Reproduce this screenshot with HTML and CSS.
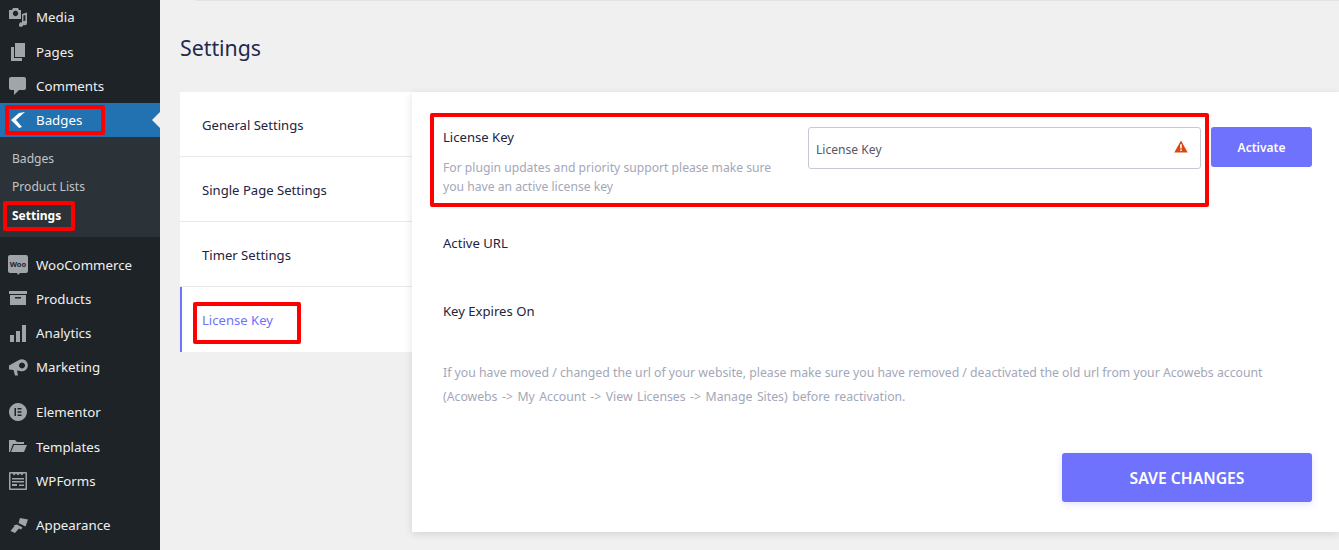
FILE: index.html
```html
<!DOCTYPE html>
<html lang="en">
<head>
<meta charset="utf-8">
<title>Settings</title>
<link rel="stylesheet" href="styles.css">
</head>
<body>
<div class="page">
  <aside class="sidebar">
    <nav class="menu">
      <a class="item item-first"><svg class="ico" viewBox="0 0 20 20"><path fill-rule="evenodd" d="M1 2h3l1-2h5l1 2h2v9H1zM7.500 2.800a2.700 2.700 0 1 0 .01 0z"/><path d="M14 6l5-1.500V15a2.200 2.200 0 1 1-1.600-2V7l-2 .6v9a2.200 2.200 0 1 1-1.400-2z"/></svg><span>Media</span></a>
      <a class="item"><svg class="ico" viewBox="0 0 20 20"><path d="M7 1h10v14H7z"/><path d="M3 5h3v11h8v3H3z"/></svg><span>Pages</span></a>
      <a class="item"><svg class="ico" viewBox="0 0 20 20"><path d="M3 1h13a2 2 0 0 1 2 2v9a2 2 0 0 1-2 2h-5l-5 5v-5H3a2 2 0 0 1-2-2V3a2 2 0 0 1 2-2z"/></svg><span>Comments</span></a>
      <a class="item item-current"><svg class="ico ico-white" viewBox="0 0 20 20"><path d="M17 2l-6 1-8 7 8 8 3-1-6-7z"/></svg><span>Badges</span></a>
      <div class="submenu">
        <a class="subitem">Badges</a>
        <a class="subitem">Product Lists</a>
        <a class="subitem subitem-current">Settings</a>
      </div>
      <a class="item item-gap"><svg class="ico" viewBox="0 0 20 20"><path d="M2 0h16a2 2 0 0 1 2 2v14a2 2 0 0 1-2 2h-6l-2 2-1-2H2a2 2 0 0 1-2-2V2a2 2 0 0 1 2-2z"/><text class="woo" x="10" y="11.500" text-anchor="middle">Woo</text></svg><span>WooCommerce</span></a>
      <a class="item"><svg class="ico" viewBox="0 0 20 20"><path fill-rule="evenodd" d="M1 2h18v3H1zM2 6h16v10H2zM7 8v1.500h6V8z"/></svg><span>Products</span></a>
      <a class="item"><svg class="ico" viewBox="0 0 20 20"><path d="M2 12h4v7H2zM8 8h4v11H8zM14 2h4v17h-4z"/></svg><span>Analytics</span></a>
      <a class="item"><svg class="ico" viewBox="0 0 20 20"><path fill-rule="evenodd" d="M1 8.500L11 3a6 6 0 1 1 1 11l-3-.5 1 5H7l-1.500-5.500L1 12.500zM14 5.500a3 3 0 1 0 .01 0z"/></svg><span>Marketing</span></a>
      <a class="item item-gap"><svg class="ico" viewBox="0 0 20 20"><path fill-rule="evenodd" d="M10 1a9 9 0 1 1-.01 0zM6.500 6v8H8V6zM9.500 6v1.500h4V6zM9.500 9.200v1.500h4V9.200zM9.500 12.500V14h4v-1.500z"/></svg><span>Elementor</span></a>
      <a class="item item-shift"><svg class="ico" viewBox="0 0 20 20"><path d="M1 3h6l2 2h7v2H5l-3 8H1z"/><path d="M6 8h13l-3 7H3z"/></svg><span>Templates</span></a>
      <a class="item"><svg class="ico" viewBox="0 0 20 20"><path fill-rule="evenodd" d="M2 1h16a1 1 0 0 1 1 1v16a1 1 0 0 1-1 1H2a1 1 0 0 1-1-1V2a1 1 0 0 1 1-1zM2.500 2.500v15h15v-15h-2l-1.500 2-2-2-2 2-2-2-2 2-1.500-2zM4 7h12v1.500H4zM4 10h12v1.500H4zM11 13.500h5V15h-5zM4 13h5v2H4z"/></svg><span>WPForms</span></a>
      <a class="item item-gap-last"><svg class="ico" viewBox="0 0 20 20"><path d="M12 3l8 1.500-2.500 7-7-3.500z"/><path d="M9 9.500l5.500 3-1.500 2-2-1-4 4.500-4.500-2 4-5-1-.5z"/></svg><span>Appearance</span></a>
    </nav>
  </aside>
  <main class="content">
    <div class="topline"></div>
    <h1 class="title">Settings</h1>
    <div class="settings">
      <ul class="tabs">
        <li class="tab">General Settings</li>
        <li class="tab">Single Page Settings</li>
        <li class="tab">Timer Settings</li>
        <li class="tab tab-active">License Key</li>
      </ul>
      <section class="panel">
        <div class="license-row">
          <div class="license-info">
            <div class="label">License Key</div>
            <p class="hint">For plugin updates and priority support please make sure you have an active license key</p>
          </div>
          <div class="input">
            <span class="input-text">License Key</span>
            <svg class="warn" viewBox="0 0 14 13"><path fill-rule="evenodd" d="M7 0.500L13.700 12.500H.3zM6.200 4.200v4.300h1.600V4.200zM6.200 9.400v1.600h1.600V9.400z"/></svg>
          </div>
          <button class="btn-activate">Activate</button>
        </div>
        <div class="label label-url">Active URL</div>
        <div class="label label-exp">Key Expires On</div>
        <div class="note">
          <p class="note-line">If you have moved / changed the url of your website, please make sure you have removed / deactivated the old url from your Acowebs account</p>
          <p class="note-line note-line-wide">(Acowebs -&gt; My Account -&gt; View Licenses -&gt; Manage Sites) before reactivation.</p>
        </div>
        <div class="actions"><button class="btn-save">SAVE CHANGES</button></div>
      </section>
    </div>
  </main>
  <div class="mark mark-badges"></div>
  <div class="mark mark-settings"></div>
  <div class="mark mark-license"></div>
  <div class="mark mark-tab"></div>
</div>
</body>
</html>
```
FILE: styles.css
```css
* { box-sizing: border-box; }
html, body { margin: 0; padding: 0; height: 550px; overflow: hidden; }
body { background: #f0f0f1; font-family: "Noto Sans", "Open Sans", sans-serif; color: #23233f; }
.page { position: relative; display: flex; width: 1339px; height: 550px; overflow: hidden; }

.sidebar { width: 160px; flex: none; background: #1d2327; }
.menu { display: flex; flex-direction: column; }
.item { display: flex; align-items: center; height: 34px; padding-left: 8px; font-size: 13.300px; color: #f0f0f1; }
.item span { margin-left: 8px; }
.item-first { height: 35px; }
.item-first span { margin-bottom: 1px; }
.ico { width: 20px; height: 20px; fill: #a0a5aa; flex: none; }
.ico-white { fill: #fff; }
.woo { font: 700 7.500px "Noto Sans", sans-serif; fill: #1d2327; }
.item-current { position: relative; background: #2271b1; color: #fff; }
.item-current::after { content: ""; position: absolute; right: 0; top: 9px; border: 8px solid transparent; border-right-color: #f0f0f1; border-left-width: 0; }
.submenu { display: flex; flex-direction: column; background: #2c3338; padding-top: 8px; height: 100px; }
.subitem { height: 28px; line-height: 28px; padding-left: 12px; font-size: 12.100px; color: #c3c4c7; }
.subitem-current { color: #fff; font-weight: 700; font-size: 12px; padding-top: 1px; }
.item-gap { margin-top: 11px; }
.item-shift { margin-top: 1px; }
.item-gap-last { margin-top: 10px; }

.content { flex: 1; padding-left: 20px; min-width: 0; }
.topline { height: 1px; margin-left: 15px; background: #e4e4e6; }
.title { margin: 32px 0 0; height: 59px; font-size: 21.300px; line-height: 29px; font-weight: 400; color: #1f2a4d; }
.settings { display: flex; align-items: flex-start; }
.tabs { width: 232px; flex: none; margin: 0; padding: 0; list-style: none; background: #fff; }
.tab { height: 65px; padding: 2px 0 0 22px; display: flex; align-items: center; font-size: 13.100px; color: #23233f; border-bottom: 1px solid #e8e8ea; }
.tab-active { padding-top: 0; color: #6e72fc; border-bottom: 0; box-shadow: inset 2px 0 0 #6e72fc; }
.panel { width: 927px; height: 440px; background: #fff; padding: 21px 27px 0 31px; box-shadow: 0 2px 8px rgba(0, 0, 0, .12); }

.license-row { display: flex; align-items: flex-start; height: 94px; }
.license-info { width: 365px; flex: none; padding-top: 14px; }
.label { font-size: 13.100px; line-height: 20px; color: #23233f; }
.hint { margin: 11px 0 0; font-size: 12.150px; line-height: 19px; color: #a3a7b8; width: 345px; }
.input { width: 393px; height: 42px; margin-top: 14px; flex: none; display: flex; align-items: center; justify-content: space-between; padding: 0 12px 0 7px; font-size: 12.100px; color: #55566a; background: #fff; border: 1px solid #c8c8d2; border-radius: 3px; }
.input-text { padding-top: 2px; }
.warn { width: 14px; height: 13px; fill: #d9480f; margin-bottom: 3px; }
.btn-activate { width: 101px; height: 40px; margin: 14px 0 0 10px; border: 0; border-radius: 3px; background: #6e72fc; color: #fff; font: 600 12px "Noto Sans", sans-serif; }
.label-url { margin-top: 26px; }
.label-exp { margin-top: 48px; }
.note { margin-top: 40px; font-size: 12.250px; line-height: 24px; color: #a3a7b8; }
.note-line { margin: 0; white-space: nowrap; }
.note-line-wide { word-spacing: 1.300px; }
.actions { display: flex; justify-content: flex-end; margin-top: 44px; }
.btn-save { width: 250px; height: 49px; border: 0; border-radius: 3px; background: #6e72fc; color: #fff; font: 600 15.700px "Noto Sans", sans-serif; box-shadow: 0 2px 6px rgba(110, 114, 252, .2); }

.mark { position: absolute; border: 4px solid #f00; border-radius: 2px; }
.mark-badges { left: 5px; top: 105px; width: 100px; height: 30px; }
.mark-settings { left: 3px; top: 201px; width: 72px; height: 30px; }
.mark-license { left: 430px; top: 113px; width: 779px; height: 94px; }
.mark-tab { left: 193px; top: 302px; width: 108px; height: 42px; }
```
